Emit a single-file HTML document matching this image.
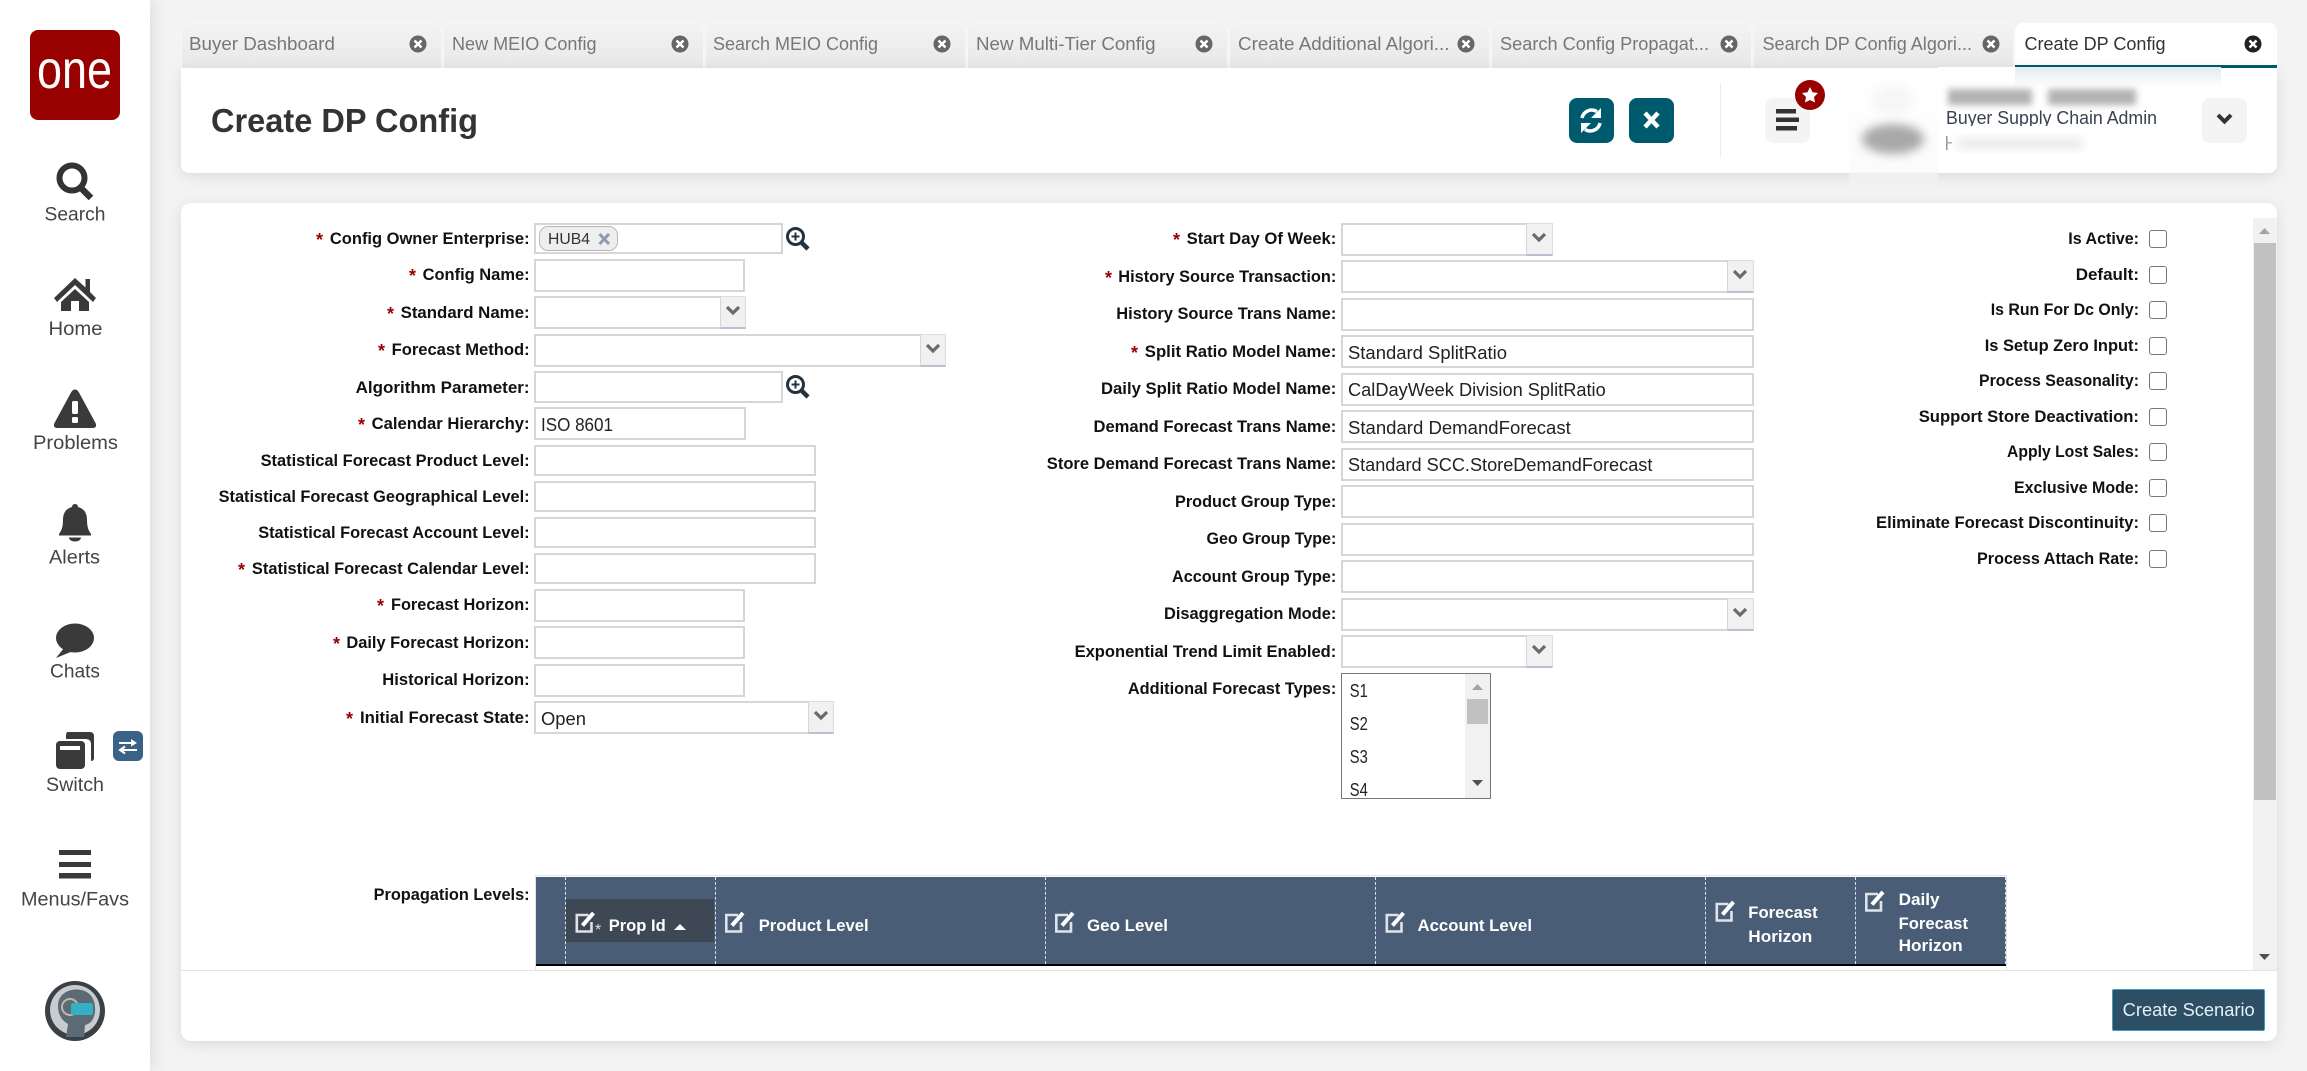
<!DOCTYPE html>
<html lang="en">
<head>
<meta charset="utf-8">
<title>Create DP Config</title>
<style>
html,body{margin:0;padding:0;width:2307px;height:1071px;overflow:hidden;background:#f3f3f3;font-family:"Liberation Sans",sans-serif}
#side{position:absolute;left:0;top:0;width:150px;height:1071px;background:#fff;box-shadow:0 0 18px rgba(0,0,0,.13)}
.tab{position:absolute;top:23px;width:261px;height:45px;box-sizing:border-box;border:1px solid #f7f7f7;border-bottom:0;border-radius:8px 8px 0 0;background:linear-gradient(#f3f3f3,#e8e8e8)}
.tab.on{background:#fff;border:0;border-bottom:3px solid #005a6e;width:262px}
.card{position:absolute;background:#fff;box-shadow:0 3px 14px rgba(0,0,0,.1)}
.b{position:absolute;box-sizing:border-box;background:#fff;border:2px solid #d6d6d8}
.a{position:absolute;box-sizing:border-box;background:#f1f1f1;border-left:1px solid #d6d6d8;border-bottom:2px solid #b9c0d2;border-top:1px solid #ddd;border-right:1px solid #ddd}
.ck{position:absolute;box-sizing:border-box;width:18px;height:18px;border:1.5px solid #777;border-radius:3px;background:#fff}
svg{position:absolute;left:0;top:0}
text{font-family:"Liberation Sans",sans-serif}
.l{font-size:17px;font-weight:700;fill:#111;text-anchor:end}
.s{font-size:18px;font-weight:700;fill:#900}
.v{font-size:18px;fill:#222}
.t{font-size:18px;fill:#777}
.n{font-size:19px;fill:#444}
.h{font-size:17px;font-weight:700;fill:#fff}
</style>
</head>
<body>
<div id="side"></div>

<div class="tab" style="left:181px"></div>
<div class="tab" style="left:443px"></div>
<div class="tab" style="left:705px"></div>
<div class="tab" style="left:967px"></div>
<div class="tab" style="left:1229px"></div>
<div class="tab" style="left:1491px"></div>
<div class="tab" style="left:1753px"></div>
<div class="tab on" style="left:2015px"></div>

<div class="card" style="left:181px;top:68px;width:2096px;height:105px;border-radius:0 0 8px 8px"></div>
<div class="card" style="left:181px;top:203px;width:2096px;height:838px;border-radius:10px"></div>

<!-- header buttons -->
<div style="position:absolute;left:1569px;top:98px;width:45px;height:45px;border-radius:8px;background:#005a6e"></div>
<div style="position:absolute;left:1629px;top:98px;width:45px;height:45px;border-radius:8px;background:#005a6e"></div>
<div style="position:absolute;left:1720px;top:83px;width:1px;height:75px;background:#eee"></div>
<div style="position:absolute;left:1765px;top:98px;width:45px;height:45px;border-radius:8px;background:#f4f4f4"></div>

<!-- left column fields -->
<div class="b" style="left:534px;top:223px;width:249px;height:31px"></div>
<div class="b" style="left:534px;top:259px;width:211px;height:33px"></div>
<div class="b" style="left:534px;top:296px;width:212px;height:33px"></div><div class="a" style="left:720px;top:296px;width:26px;height:33px"></div>
<div class="b" style="left:534px;top:334px;width:412px;height:33px"></div><div class="a" style="left:920px;top:334px;width:26px;height:33px"></div>
<div class="b" style="left:534px;top:371px;width:249px;height:32px"></div>
<div class="b" style="left:534px;top:407px;width:212px;height:33px"></div>
<div class="b" style="left:534px;top:445px;width:282px;height:31px"></div>
<div class="b" style="left:534px;top:481px;width:282px;height:31px"></div>
<div class="b" style="left:534px;top:517px;width:282px;height:31px"></div>
<div class="b" style="left:534px;top:553px;width:282px;height:31px"></div>
<div class="b" style="left:534px;top:589px;width:211px;height:33px"></div>
<div class="b" style="left:534px;top:626px;width:211px;height:33px"></div>
<div class="b" style="left:534px;top:664px;width:211px;height:33px"></div>
<div class="b" style="left:534px;top:701px;width:300px;height:33px"></div><div class="a" style="left:808px;top:701px;width:26px;height:33px"></div>
<div style="position:absolute;box-sizing:border-box;left:539px;top:226px;width:79px;height:25px;background:#eee;border:1px solid #b8b8b8;border-radius:9px"></div>

<!-- middle column fields -->
<div class="b" style="left:1341px;top:223px;width:212px;height:33px"></div><div class="a" style="left:1526px;top:223px;width:27px;height:33px"></div>
<div class="b" style="left:1341px;top:260px;width:413px;height:33px"></div><div class="a" style="left:1727px;top:260px;width:27px;height:33px"></div>
<div class="b" style="left:1341px;top:298px;width:413px;height:33px"></div>
<div class="b" style="left:1341px;top:335px;width:413px;height:33px"></div>
<div class="b" style="left:1341px;top:373px;width:413px;height:33px"></div>
<div class="b" style="left:1341px;top:410px;width:413px;height:33px"></div>
<div class="b" style="left:1341px;top:448px;width:413px;height:33px"></div>
<div class="b" style="left:1341px;top:485px;width:413px;height:33px"></div>
<div class="b" style="left:1341px;top:523px;width:413px;height:33px"></div>
<div class="b" style="left:1341px;top:560px;width:413px;height:33px"></div>
<div class="b" style="left:1341px;top:598px;width:413px;height:33px"></div><div class="a" style="left:1727px;top:598px;width:27px;height:33px"></div>
<div class="b" style="left:1341px;top:635px;width:212px;height:33px"></div><div class="a" style="left:1526px;top:635px;width:27px;height:33px"></div>
<div class="b" style="left:1341px;top:673px;width:150px;height:126px;border:1px solid #767676;overflow:hidden"></div>
<div style="position:absolute;left:1465px;top:674px;width:25px;height:124px;background:#f1f1f1"></div>
<div style="position:absolute;left:1467px;top:699px;width:21px;height:25px;background:#c1c1c1"></div>

<!-- checkboxes -->
<div class="ck" style="left:2149px;top:230px"></div>
<div class="ck" style="left:2149px;top:266px"></div>
<div class="ck" style="left:2149px;top:301px"></div>
<div class="ck" style="left:2149px;top:337px"></div>
<div class="ck" style="left:2149px;top:372px"></div>
<div class="ck" style="left:2149px;top:408px"></div>
<div class="ck" style="left:2149px;top:443px"></div>
<div class="ck" style="left:2149px;top:479px"></div>
<div class="ck" style="left:2149px;top:514px"></div>
<div class="ck" style="left:2149px;top:550px"></div>

<!-- main scrollbar -->
<div style="position:absolute;left:2253px;top:218px;width:24px;height:752px;background:#f1f1f1"></div>
<div style="position:absolute;left:2254px;top:243px;width:22px;height:557px;background:#c1c1c1"></div>

<!-- table -->
<div style="position:absolute;box-sizing:border-box;left:535px;top:875px;width:1472px;height:95px;background:#fff;border:1px solid #e2e2e2;border-bottom:0"></div>
<div style="position:absolute;left:536px;top:877px;width:1470px;height:87px;background:#4a5d77;border-bottom:2px solid #000"></div>
<div style="position:absolute;left:565px;top:899px;width:149px;height:43px;background:#3e4754"></div>
<div style="position:absolute;left:565px;top:877px;height:87px;border-left:1px dashed #dde"></div>
<div style="position:absolute;left:715px;top:877px;height:87px;border-left:1px dashed #dde"></div>
<div style="position:absolute;left:1045px;top:877px;height:87px;border-left:1px dashed #dde"></div>
<div style="position:absolute;left:1375px;top:877px;height:87px;border-left:1px dashed #dde"></div>
<div style="position:absolute;left:1705px;top:877px;height:87px;border-left:1px dashed #dde"></div>
<div style="position:absolute;left:1855px;top:877px;height:87px;border-left:1px dashed #dde"></div>
<div style="position:absolute;left:2005px;top:877px;height:87px;border-left:1px dashed #dde"></div>

<!-- footer -->
<div style="position:absolute;left:181px;top:970px;width:2096px;height:1px;background:#e4e4e4"></div>
<div style="position:absolute;box-sizing:border-box;left:2112px;top:989px;width:153px;height:42px;background:#2d4f66;border:1.5px solid #3f9db8;border-radius:2px"></div>

<svg width="2307" height="1071" viewBox="0 0 2307 1071">
<defs>
<filter id="bl" x="-30%" y="-60%" width="160%" height="220%"><feGaussianBlur stdDeviation="5"/></filter>
<filter id="bl3" x="-20%" y="-80%" width="140%" height="260%"><feGaussianBlur stdDeviation="3.5"/></filter>
<linearGradient id="fade" x1="0" y1="0" x2="0" y2="1"><stop offset="0" stop-color="#fff"/><stop offset=".8" stop-color="#fbfbfb"/><stop offset=".82" stop-color="#efefef"/><stop offset="1" stop-color="#f3f3f3"/></linearGradient>
<linearGradient id="teal" x1="0" y1="0" x2="0" y2="1"><stop offset="0" stop-color="#dfecef"/><stop offset="1" stop-color="#fff"/></linearGradient>
<g id="chev"><path d="M-6-4 0 2 6-4" fill="none" stroke="#6a6a6a" stroke-width="3.2"/></g>
<g id="tx"><circle r="8.5" fill="#666"/><path d="M-3.5-3.5 3.5 3.5M3.5-3.5-3.5 3.5" stroke="#fff" stroke-width="2.6"/></g>
<g id="mag"><circle cx="9.5" cy="9.5" r="8" fill="none" stroke="#223240" stroke-width="3"/><path d="M15 15 22 22" stroke="#223240" stroke-width="4.5"/><path d="M5.5 9.5h8M9.5 5.5v8" stroke="#223240" stroke-width="2"/></g>
<g id="ed"><path d="M13 3H1.3V19.5H16V10" fill="none" stroke="#dfe3e8" stroke-width="2.6"/><path d="M7 13.5 18 1" stroke="#fff" stroke-width="4"/></g>
</defs>

<!-- logo -->
<rect x="30" y="30" width="90" height="90" rx="8" fill="#990000"/>
<text x="37" y="88" font-size="54" fill="#fff" textLength="75" lengthAdjust="spacingAndGlyphs">one</text>

<!-- sidebar icons -->
<circle cx="72" cy="178" r="12.5" fill="none" stroke="#333" stroke-width="6"/><path d="M81 188 91 198" stroke="#333" stroke-width="6.5"/>
<path d="M75 278 54 298 57 302 75 285 93 302 96 298 90 292V279H85.500V287.500Z" fill="#3a3a3a"/><path d="M75 289 61 302V311H71V301H79V311H89V302Z" fill="#3a3a3a"/>
<path d="M75 389.500C73 389.500 72 391 71 392.500L54.500 423C53 426 54.500 428 57 428H93C95.500 428 97 426 95.500 423L79 392.500C78 391 77 389.500 75 389.500Z" fill="#3a3a3a"/><rect x="72" y="401" width="6" height="13" rx="1.500" fill="#fff"/><rect x="72" y="417" width="6" height="6" rx="1.500" fill="#fff"/>
<path d="M75 504C73 504 72 505.500 72 507C65 509 63 514 63 520C63 528 61 531 59 534V535.500H91V534C89 531 87 528 87 520C87 514 85 509 78 507C78 505.500 77 504 75 504Z" fill="#3a3a3a"/><path d="M69 537.500H81C81 540 78 541.500 75 541.500C72 541.500 69 540 69 537.500Z" fill="#3a3a3a"/>
<ellipse cx="75" cy="638" rx="19" ry="14.500" fill="#3a3a3a"/><path d="M64 648 56 658 73 651Z" fill="#3a3a3a"/>
<path d="M68 732H90C92.500 732 94 733.500 94 736V758C94 760 92.500 761 91 761V744C91 741 89 739 86 739H66C66 734 66 732 68 732Z" fill="#3a3a3a"/><rect x="56" y="741" width="29" height="28" rx="4" fill="#3a3a3a"/><rect x="60" y="746" width="20" height="4" fill="#fff"/>
<rect x="113" y="731" width="30" height="30" rx="6" fill="#3a6186"/><path d="M119 743H135M137 750H121M125 746.500 120 750 125 753.500" fill="none" stroke="#fff" stroke-width="2"/><path d="M131 739 137 743 131 746.500Z" fill="#fff"/>
<rect x="59" y="850" width="32" height="5" fill="#3a3a3a"/><rect x="59" y="862" width="32" height="5" fill="#3a3a3a"/><rect x="59" y="873" width="32" height="5.500" fill="#3a3a3a"/>
<circle cx="75" cy="1011" r="30" fill="#3b4046"/><circle cx="75" cy="1010" r="25" fill="#c9cccf"/><path d="M58 1006C58 992 72 988 81 990C91 992 96 1000 95 1012C94 1020 90 1024 85 1025L84 1037H66L68 1024C61 1020 58 1014 58 1006Z" fill="#5b6a75"/><circle cx="70" cy="1007" r="8" fill="none" stroke="#c2b79a" stroke-width="2"/><rect x="71" y="1003" width="22" height="12" rx="2" fill="#33b0c4"/>

<!-- sidebar labels -->
<text class="n" x="44.500" y="220.500" textLength="61" lengthAdjust="spacingAndGlyphs">Search</text>
<text class="n" x="48.500" y="335" textLength="54" lengthAdjust="spacingAndGlyphs">Home</text>
<text class="n" x="33" y="449" textLength="85" lengthAdjust="spacingAndGlyphs">Problems</text>
<text class="n" x="49" y="563.500" textLength="51" lengthAdjust="spacingAndGlyphs">Alerts</text>
<text class="n" x="50" y="677.500" textLength="50" lengthAdjust="spacingAndGlyphs">Chats</text>
<text class="n" x="46" y="791" textLength="58" lengthAdjust="spacingAndGlyphs">Switch</text>
<text class="n" x="21" y="905.500" textLength="108" lengthAdjust="spacingAndGlyphs">Menus/Favs</text>

<!-- tabs -->
<text class="t" x="189" y="50" textLength="146" lengthAdjust="spacingAndGlyphs">Buyer Dashboard</text>
<text class="t" x="452" y="50" textLength="144.500" lengthAdjust="spacingAndGlyphs">New MEIO Config</text>
<text class="t" x="713" y="50" textLength="165" lengthAdjust="spacingAndGlyphs">Search MEIO Config</text>
<text class="t" x="976" y="50" textLength="179.500" lengthAdjust="spacingAndGlyphs">New Multi-Tier Config</text>
<text class="t" x="1238" y="50" textLength="211.500" lengthAdjust="spacingAndGlyphs">Create Additional Algori...</text>
<text class="t" x="1500" y="50" textLength="209" lengthAdjust="spacingAndGlyphs">Search Config Propagat...</text>
<text class="t" x="1762.500" y="50" textLength="209.500" lengthAdjust="spacingAndGlyphs">Search DP Config Algori...</text>
<text class="t" x="2024.500" y="50" textLength="141" lengthAdjust="spacingAndGlyphs" style="fill:#333">Create DP Config</text>
<use href="#tx" x="418" y="44"/><use href="#tx" x="680" y="44"/><use href="#tx" x="942" y="44"/><use href="#tx" x="1204" y="44"/><use href="#tx" x="1466" y="44"/><use href="#tx" x="1729" y="44"/><use href="#tx" x="1991" y="44"/>
<circle cx="2253" cy="44" r="8.500" fill="#222"/><path d="M2249.500 40.500 2256.500 47.500M2256.500 40.500 2249.500 47.500" stroke="#fff" stroke-width="2.600"/>

<!-- title -->
<text x="211" y="132" font-size="33" font-weight="700" fill="#333" textLength="267" lengthAdjust="spacingAndGlyphs">Create DP Config</text>

<!-- header icons -->
<path d="M1582 118A10 10 0 0 1 1597 111.500" fill="none" stroke="#fff" stroke-width="3.500"/><path d="M1601 108V118H1591Z" fill="#fff"/>
<path d="M1600 123A10 10 0 0 1 1585 129.500" fill="none" stroke="#fff" stroke-width="3.500"/><path d="M1581 133V123H1591Z" fill="#fff"/>
<path d="M1645 113 1658 127M1658 113 1645 127" stroke="#fff" stroke-width="4.500"/>
<rect x="1776" y="109" width="20" height="4.500" fill="#333"/><rect x="1776" y="117.500" width="23" height="4.500" fill="#333"/><rect x="1776" y="126" width="21" height="4.500" fill="#333"/>
<ellipse cx="1810" cy="95" rx="15" ry="15" fill="#990000"/><path d="M1810 87 1812.500 92.300 1818 93 1814 97 1815 102.500 1810 100 1805 102.500 1806 97 1802 93 1807.500 92.300Z" fill="#fff"/>

<!-- blurred user block -->
<rect x="1849" y="78" width="89" height="117" fill="url(#fade)"/>
<ellipse cx="1893" cy="139" rx="31" ry="15" fill="#a8a8a8" filter="url(#bl)"/>
<ellipse cx="1893" cy="100" rx="20" ry="16" fill="#f6f6f6" filter="url(#bl)"/>
<rect x="1938" y="67" width="283" height="40" fill="#fff"/>
<rect x="2015" y="67" width="206" height="20" fill="url(#teal)"/>
<rect x="1948" y="89" width="84" height="16" fill="#b2b2b2" filter="url(#bl3)"/><rect x="2048" y="89" width="88" height="16" fill="#b2b2b2" filter="url(#bl3)"/>
<text x="1946" y="124" font-size="18" fill="#3a4250" textLength="211" lengthAdjust="spacingAndGlyphs">Buyer Supply Chain Admin</text>
<rect x="1953" y="126" width="260" height="47" fill="#fff"/>
<rect x="1946" y="136" width="1.500" height="14" fill="#7e9aa5"/><rect x="1946" y="142" width="6" height="1.500" fill="#aaa"/>
<rect x="1958" y="139" width="125" height="9" fill="#e4e4e4" filter="url(#bl)"/>
<rect x="2202" y="98" width="45" height="45" rx="8" fill="#f4f4f4"/>
<path d="M2218 115 2224.500 121.500 2231 115" fill="none" stroke="#333" stroke-width="4"/>

<!-- chip -->
<text x="548" y="244" font-size="16" fill="#333" textLength="42" lengthAdjust="spacingAndGlyphs">HUB4</text>
<path d="M599.500 234 609 244M609 234 599.500 244" stroke="#8f9bac" stroke-width="3"/>
<use href="#mag" x="786" y="227"/><use href="#mag" x="786" y="375"/>

<!-- chevrons -->
<use href="#chev" x="733" y="311"/><use href="#chev" x="933" y="349"/><use href="#chev" x="821" y="716"/>
<use href="#chev" x="1539" y="238"/><use href="#chev" x="1740" y="275"/><use href="#chev" x="1740" y="613"/><use href="#chev" x="1539" y="650"/>

<!-- left labels -->
<text class="l" x="529.600" y="244" textLength="199.700" lengthAdjust="spacingAndGlyphs">Config Owner Enterprise:</text><text class="s" x="316" y="246">*</text>
<text class="l" x="529.600" y="280" textLength="107" lengthAdjust="spacingAndGlyphs">Config Name:</text><text class="s" x="409" y="282">*</text>
<text class="l" x="529.600" y="318" textLength="129" lengthAdjust="spacingAndGlyphs">Standard Name:</text><text class="s" x="387" y="320">*</text>
<text class="l" x="529.600" y="355" textLength="138" lengthAdjust="spacingAndGlyphs">Forecast Method:</text><text class="s" x="378" y="357">*</text>
<text class="l" x="529.600" y="393" textLength="174" lengthAdjust="spacingAndGlyphs">Algorithm Parameter:</text>
<text class="l" x="529.600" y="429" textLength="158" lengthAdjust="spacingAndGlyphs">Calendar Hierarchy:</text><text class="s" x="358" y="431">*</text>
<text class="l" x="529.600" y="466" textLength="269" lengthAdjust="spacingAndGlyphs">Statistical Forecast Product Level:</text>
<text class="l" x="529.600" y="502" textLength="311" lengthAdjust="spacingAndGlyphs">Statistical Forecast Geographical Level:</text>
<text class="l" x="529.600" y="538" textLength="271.400" lengthAdjust="spacingAndGlyphs">Statistical Forecast Account Level:</text>
<text class="l" x="529.600" y="574" textLength="277.700" lengthAdjust="spacingAndGlyphs">Statistical Forecast Calendar Level:</text><text class="s" x="238" y="576">*</text>
<text class="l" x="529.600" y="610" textLength="138.600" lengthAdjust="spacingAndGlyphs">Forecast Horizon:</text><text class="s" x="377" y="612">*</text>
<text class="l" x="529.600" y="648" textLength="183.200" lengthAdjust="spacingAndGlyphs">Daily Forecast Horizon:</text><text class="s" x="333" y="650">*</text>
<text class="l" x="529.600" y="685" textLength="147.300" lengthAdjust="spacingAndGlyphs">Historical Horizon:</text>
<text class="l" x="529.600" y="723" textLength="169.600" lengthAdjust="spacingAndGlyphs">Initial Forecast State:</text><text class="s" x="346" y="725">*</text>
<text class="l" x="529.600" y="900" textLength="156" lengthAdjust="spacingAndGlyphs">Propagation Levels:</text>

<!-- left values -->
<text class="v" x="541" y="431" textLength="72" lengthAdjust="spacingAndGlyphs">ISO 8601</text>
<text class="v" x="541" y="725" textLength="45" lengthAdjust="spacingAndGlyphs">Open</text>

<!-- middle labels -->
<text class="l" x="1336.300" y="244" textLength="149.700" lengthAdjust="spacingAndGlyphs">Start Day Of Week:</text><text class="s" x="1173" y="246">*</text>
<text class="l" x="1336.300" y="282" textLength="218" lengthAdjust="spacingAndGlyphs">History Source Transaction:</text><text class="s" x="1105" y="284">*</text>
<text class="l" x="1336.300" y="319" textLength="220" lengthAdjust="spacingAndGlyphs">History Source Trans Name:</text>
<text class="l" x="1336.300" y="357" textLength="191.500" lengthAdjust="spacingAndGlyphs">Split Ratio Model Name:</text><text class="s" x="1131" y="359">*</text>
<text class="l" x="1336.300" y="394" textLength="235.300" lengthAdjust="spacingAndGlyphs">Daily Split Ratio Model Name:</text>
<text class="l" x="1336.300" y="432" textLength="242.800" lengthAdjust="spacingAndGlyphs">Demand Forecast Trans Name:</text>
<text class="l" x="1336.300" y="469" textLength="289.500" lengthAdjust="spacingAndGlyphs">Store Demand Forecast Trans Name:</text>
<text class="l" x="1336.300" y="507" textLength="161.300" lengthAdjust="spacingAndGlyphs">Product Group Type:</text>
<text class="l" x="1336.300" y="544" textLength="129.800" lengthAdjust="spacingAndGlyphs">Geo Group Type:</text>
<text class="l" x="1336.300" y="582" textLength="164.300" lengthAdjust="spacingAndGlyphs">Account Group Type:</text>
<text class="l" x="1336.300" y="619" textLength="172.300" lengthAdjust="spacingAndGlyphs">Disaggregation Mode:</text>
<text class="l" x="1336.300" y="657" textLength="261.700" lengthAdjust="spacingAndGlyphs">Exponential Trend Limit Enabled:</text>
<text class="l" x="1336.300" y="694" textLength="208.400" lengthAdjust="spacingAndGlyphs">Additional Forecast Types:</text>

<!-- middle values -->
<text class="v" x="1348" y="359" textLength="159" lengthAdjust="spacingAndGlyphs">Standard SplitRatio</text>
<text class="v" x="1348" y="396" textLength="257.700" lengthAdjust="spacingAndGlyphs">CalDayWeek Division SplitRatio</text>
<text class="v" x="1348" y="434" textLength="222.800" lengthAdjust="spacingAndGlyphs">Standard DemandForecast</text>
<text class="v" x="1348" y="471" textLength="304.400" lengthAdjust="spacingAndGlyphs">Standard SCC.StoreDemandForecast</text>
<text class="v" x="1349.800" y="697" textLength="18" lengthAdjust="spacingAndGlyphs">S1</text>
<text class="v" x="1349.800" y="730" textLength="18" lengthAdjust="spacingAndGlyphs">S2</text>
<text class="v" x="1349.800" y="763" textLength="18" lengthAdjust="spacingAndGlyphs">S3</text>
<svg x="1342" y="674" width="120" height="124" viewBox="1342 674 120 124"><text class="v" x="1349.800" y="796" textLength="18" lengthAdjust="spacingAndGlyphs">S4</text></svg>
<path d="M1477.500 684 1483 690H1472Z" fill="#a3a3a3"/><path d="M1477.500 786 1483 780H1472Z" fill="#505050"/>

<!-- right labels -->
<text class="l" x="2139" y="244" textLength="70.700" lengthAdjust="spacingAndGlyphs">Is Active:</text>
<text class="l" x="2139" y="280" textLength="63.300" lengthAdjust="spacingAndGlyphs">Default:</text>
<text class="l" x="2139" y="315" textLength="148.300" lengthAdjust="spacingAndGlyphs">Is Run For Dc Only:</text>
<text class="l" x="2139" y="351" textLength="154.300" lengthAdjust="spacingAndGlyphs">Is Setup Zero Input:</text>
<text class="l" x="2139" y="386" textLength="160" lengthAdjust="spacingAndGlyphs">Process Seasonality:</text>
<text class="l" x="2139" y="422" textLength="220.300" lengthAdjust="spacingAndGlyphs">Support Store Deactivation:</text>
<text class="l" x="2139" y="457" textLength="132" lengthAdjust="spacingAndGlyphs">Apply Lost Sales:</text>
<text class="l" x="2139" y="493" textLength="125" lengthAdjust="spacingAndGlyphs">Exclusive Mode:</text>
<text class="l" x="2139" y="528" textLength="263" lengthAdjust="spacingAndGlyphs">Eliminate Forecast Discontinuity:</text>
<text class="l" x="2139" y="564" textLength="162" lengthAdjust="spacingAndGlyphs">Process Attach Rate:</text>

<!-- scrollbar arrows -->
<path d="M2264.500 228 2270 234H2259Z" fill="#a3a3a3"/><path d="M2264.500 960 2270 954H2259Z" fill="#505050"/>

<!-- table header -->
<use href="#ed" x="575.500" y="912"/><use href="#ed" x="725" y="912"/><use href="#ed" x="1055" y="912"/><use href="#ed" x="1385.500" y="912"/><use href="#ed" x="1715.500" y="901"/><use href="#ed" x="1865" y="891"/>
<text x="595" y="935" font-size="16" fill="#dfe3e8">*</text>
<text class="h" x="608.700" y="931" textLength="57" lengthAdjust="spacingAndGlyphs">Prop Id</text>
<path d="M680 924 686 930H674Z" fill="#fff"/>
<text class="h" x="758.700" y="931" textLength="110" lengthAdjust="spacingAndGlyphs">Product Level</text>
<text class="h" x="1087" y="931" textLength="81" lengthAdjust="spacingAndGlyphs">Geo Level</text>
<text class="h" x="1417.500" y="931" textLength="114.500" lengthAdjust="spacingAndGlyphs">Account Level</text>
<text class="h" x="1748.300" y="918" textLength="69.400" lengthAdjust="spacingAndGlyphs">Forecast</text>
<text class="h" x="1748.300" y="942" textLength="64" lengthAdjust="spacingAndGlyphs">Horizon</text>
<text class="h" x="1898.600" y="905" textLength="41" lengthAdjust="spacingAndGlyphs">Daily</text>
<text class="h" x="1898.600" y="929" textLength="69.400" lengthAdjust="spacingAndGlyphs">Forecast</text>
<text class="h" x="1898.600" y="951" textLength="64" lengthAdjust="spacingAndGlyphs">Horizon</text>

<!-- footer button -->
<text x="2122.700" y="1016" font-size="18" fill="#e4f0f5" textLength="132" lengthAdjust="spacingAndGlyphs">Create Scenario</text>
</svg>
</body>
</html>
